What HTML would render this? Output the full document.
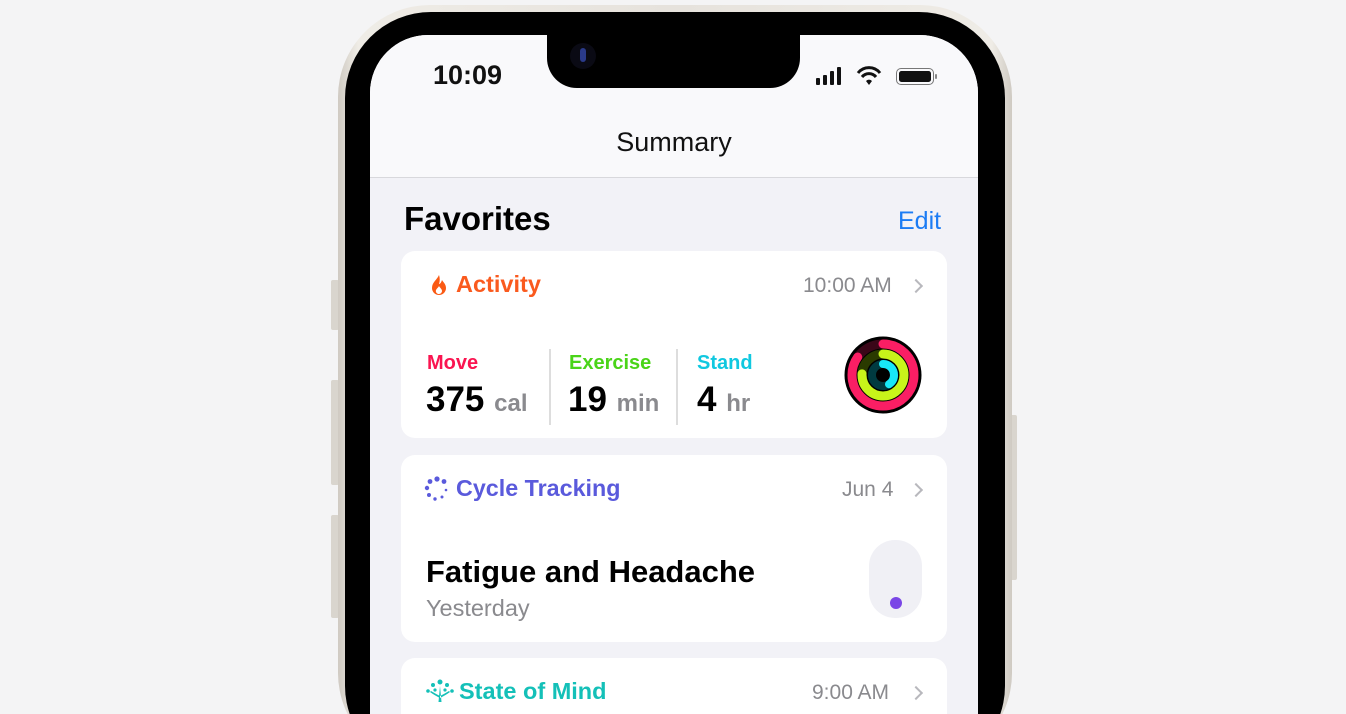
<!DOCTYPE html>
<html><head><meta charset="utf-8"><style>
*{margin:0;padding:0;box-sizing:border-box}
html,body{width:1346px;height:714px;overflow:hidden}
body{background:#f4f4f5;font-family:"Liberation Sans",sans-serif}
#wrap{position:relative;width:1346px;height:714px;overflow:hidden}
.abs{position:absolute}
.frame{left:338px;top:5px;width:674px;height:760px;border-radius:92px;background:linear-gradient(90deg,#cfcac2,#efece6 3%,#e6e2dc 50%,#efece6 97%,#cfcac2);}
.bezel{left:345px;top:12px;width:660px;height:760px;border-radius:86px;background:#000}
.screen{left:370px;top:35px;width:608px;height:740px;border-radius:58px;background:#f2f2f7;overflow:hidden}
.hdr{left:0;top:0;width:608px;height:143px;background:#f9f9fb;border-bottom:1.5px solid #d8d8dc}
.card{left:31px;width:546px;background:#fff;border-radius:14px}
.btn{background:#d9d5ce;border-radius:2px}
.t{position:absolute;white-space:nowrap}
.chev{position:absolute;width:10px;height:10px;border-right:2px solid #b8b8bd;border-top:2px solid #b8b8bd;transform:rotate(45deg)}
</style></head><body><div id="wrap">
<div class="abs btn" style="left:331px;top:280px;width:8px;height:50px"></div>
<div class="abs btn" style="left:331px;top:380px;width:8px;height:105px"></div>
<div class="abs btn" style="left:331px;top:515px;width:8px;height:103px"></div>
<div class="abs btn" style="left:1010px;top:415px;width:7px;height:165px"></div>
<div class="abs frame"></div>
<div class="abs bezel"></div>
<div class="abs screen">
 <div class="abs hdr"></div>
 <div class="abs" style="left:177px;top:0;width:253px;height:53px;background:#000;border-radius:0 0 30px 30px"></div>
 <div class="abs" style="left:200px;top:8px;width:26px;height:26px;border-radius:50%;background:#0a0a14"></div>
 <div class="abs" style="left:210px;top:13px;width:6px;height:14px;border-radius:3px;background:#2a3a8a"></div>
 <div class="t" style="left:63px;top:25px;font-size:27px;font-weight:600;color:#111">10:09</div>
 <svg class="abs" style="left:444px;top:30px" width="125" height="24">
  <rect x="2" y="13" width="4" height="7" rx="1" fill="#111"/><rect x="9" y="10" width="4" height="10" rx="1" fill="#111"/><rect x="16" y="6" width="4" height="14" rx="1" fill="#111"/><rect x="23" y="2" width="4" height="18" rx="1" fill="#111"/>
  <path d="M44 8 A14 14 0 0 1 66 8" stroke="#111" stroke-width="3" fill="none"/><path d="M48 12 A9 9 0 0 1 62 12" stroke="#111" stroke-width="3" fill="none"/><path d="M52 16 L55 20 L58 16 A4 4 0 0 0 52 16Z" fill="#111"/>
  <rect x="82.5" y="3.5" width="37" height="16" rx="4.5" stroke="#777" fill="none"/><rect x="85" y="6" width="32" height="11" rx="2.5" fill="#111"/><rect x="121" y="9" width="2" height="5" rx="1" fill="#888"/>
 </svg>
 <div class="t" style="left:0;width:608px;text-align:center;top:92px;font-size:27px;font-weight:500;color:#111">Summary</div>
 <div class="t" style="left:34px;top:165px;font-size:33px;font-weight:700;color:#000">Favorites</div>
 <div class="t" style="left:528px;top:172px;font-size:25px;color:#1c7cf4">Edit</div>

 <div class="abs card" style="top:216px;height:187px">
  <svg class="abs" style="left:28px;top:22px" width="20" height="24" viewBox="0 0 20 24"><path d="M10 2 C8 7 3 9 3 15 A7 7 0 0 0 17 15 C17 11 14 9 13 7 C12 10 11 11 10 11 C11 8 11 5 10 2Z M10 21 A3 3 0 0 1 7 17 C8 15 9 15 10 13 C11 15 13 16 13 18 A3 3 0 0 1 10 21Z" fill="#fa5a14" fill-rule="evenodd"/></svg>
  <div class="t" style="left:55px;top:20px;font-size:23.5px;font-weight:600;color:#fa5a1e">Activity</div>
  <div class="t" style="left:402px;top:23px;font-size:21px;color:#8a8a8e">10:00 AM</div>
  <div class="chev" style="left:510px;top:30px"></div>
  <div class="t" style="left:26px;top:101px;font-size:20px;font-weight:700;color:#fa1450">Move</div>
  <div class="t" style="left:25px;top:129px;font-size:35px;font-weight:700;color:#000">375 <span style="font-size:24px;color:#8a8a8e;font-weight:600">cal</span></div>
  <div class="abs" style="left:148px;top:98px;width:1.5px;height:76px;background:#ddd"></div>
  <div class="t" style="left:168px;top:101px;font-size:20px;font-weight:700;color:#4ad418">Exercise</div>
  <div class="t" style="left:167px;top:129px;font-size:35px;font-weight:700;color:#000">19 <span style="font-size:24px;color:#8a8a8e;font-weight:600">min</span></div>
  <div class="abs" style="left:275px;top:98px;width:1.5px;height:76px;background:#ddd"></div>
  <div class="t" style="left:296px;top:101px;font-size:20px;font-weight:700;color:#10c8e0">Stand</div>
  <div class="t" style="left:296px;top:129px;font-size:35px;font-weight:700;color:#000">4 <span style="font-size:24px;color:#8a8a8e;font-weight:600">hr</span></div>
  <svg class="abs" style="left:443px;top:85px" width="78" height="78" viewBox="0 0 78 78">
   <circle cx="39" cy="39" r="38.5" fill="#000"/>
   <circle cx="39" cy="39" r="31" stroke="#3a0618" stroke-width="9" fill="none"/>
   <circle cx="39" cy="39" r="31" stroke="#fa1e64" stroke-width="9" fill="none" stroke-dasharray="165 200" stroke-linecap="round" transform="rotate(-90 39 39)"/>
   <circle cx="39" cy="39" r="21" stroke="#2a3a00" stroke-width="9" fill="none"/>
   <circle cx="39" cy="39" r="21" stroke="#c8f41a" stroke-width="9" fill="none" stroke-dasharray="100 200" stroke-linecap="round" transform="rotate(-90 39 39)"/>
   <circle cx="39" cy="39" r="11" stroke="#003a40" stroke-width="8" fill="none"/>
   <circle cx="39" cy="39" r="11" stroke="#18e8f8" stroke-width="8" fill="none" stroke-dasharray="28 200" stroke-linecap="round" transform="rotate(-90 39 39)"/>
  </svg>
 </div>

 <div class="abs card" style="top:420px;height:187px">
  <svg class="abs" style="left:22px;top:20px" width="28" height="28" viewBox="0 0 28 28" fill="#5a5adc">
   <circle cx="14" cy="4" r="2.6"/><circle cx="21" cy="6.5" r="2.4"/><circle cx="7" cy="6.5" r="2.4"/><circle cx="4" cy="13" r="2.2"/><circle cx="6" cy="20" r="2"/><circle cx="12" cy="24" r="1.7"/><circle cx="19" cy="22" r="1.5"/><circle cx="23" cy="15" r="1.3"/>
  </svg>
  <div class="t" style="left:55px;top:20px;font-size:23.3px;font-weight:600;color:#5a5adc">Cycle Tracking</div>
  <div class="t" style="left:441px;top:23px;font-size:21px;color:#8a8a8e">Jun 4</div>
  <div class="chev" style="left:510px;top:30px"></div>
  <div class="t" style="left:25px;top:99px;font-size:31px;font-weight:700;color:#000">Fatigue and Headache</div>
  <div class="t" style="left:25px;top:140px;font-size:23.5px;color:#8a8a8e">Yesterday</div>
  <div class="abs" style="left:468px;top:85px;width:53px;height:78px;border-radius:26px;background:#f0f0f5"></div>
  <div class="abs" style="left:489px;top:142px;width:12px;height:12px;border-radius:50%;background:#7a46e6"></div>
 </div>

 <div class="abs card" style="top:623px;height:140px">
  <svg class="abs" style="left:24px;top:20px" width="30" height="28" viewBox="0 0 30 28" fill="#14c0b8">
   <circle cx="15" cy="4" r="2.5"/><circle cx="8" cy="7" r="2"/><circle cx="22" cy="7" r="2"/><circle cx="3" cy="13" r="1.8"/><circle cx="27" cy="13" r="1.8"/><circle cx="10" cy="12" r="1.6"/><circle cx="20" cy="12" r="1.6"/>
   <path d="M15 8 L16.5 24 L13.5 24Z M15 20 Q9 17 5 14 L6 13 Q11 16 15 18Z M15 20 Q21 17 25 14 L24 13 Q19 16 15 18Z"/>
  </svg>
  <div class="t" style="left:58px;top:20px;font-size:23.5px;font-weight:600;color:#14c0b8">State of Mind</div>
  <div class="t" style="left:411px;top:23px;font-size:21px;color:#8a8a8e">9:00 AM</div>
  <div class="chev" style="left:510px;top:30px"></div>
 </div>
</div>
</div></body></html>
